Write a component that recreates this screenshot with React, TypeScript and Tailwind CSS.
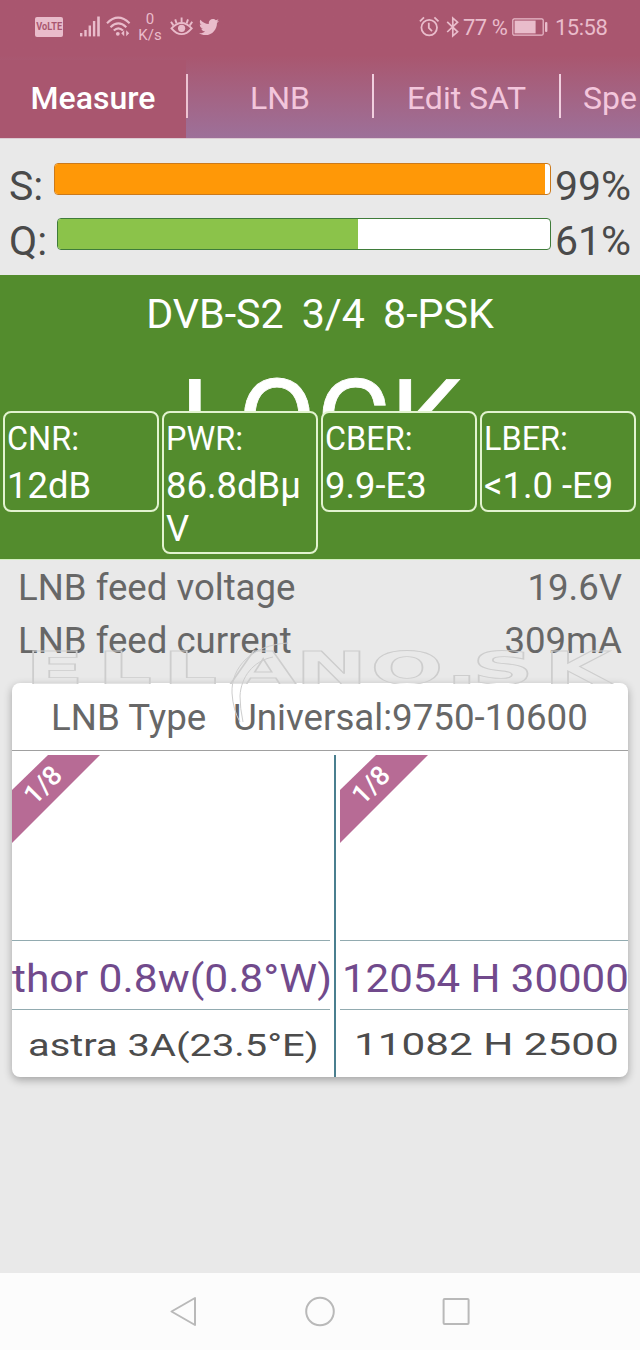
import React from "react";
import { FaTwitter } from "react-icons/fa";

const tint = "#e9bccb";

function Volte() {
  return (
    <div className="ml-[35px] mt-[17px] flex h-[20px] w-[28px] items-center justify-center rounded-[2px] bg-[#e9bccb]">
      <span className="inline-block scale-x-[0.8] text-[11.5px] leading-none font-bold text-[#a9566f]">VoLTE</span>
    </div>
  );
}

function StatusBar() {
  return (
    <div className="flex h-[60px] items-start text-[#e9bccb]">
      <Volte />
      <svg className="mt-[16px] ml-[16px]" width="22" height="21" viewBox="0 0 22 21" fill={tint}>
        <rect x="1" y="17" width="2.4" height="3.4" />
        <rect x="5.3" y="14" width="2.4" height="6.4" />
        <rect x="9.6" y="9.5" width="2.4" height="10.9" />
        <rect x="13.9" y="5" width="2.4" height="15.4" />
        <rect x="18.2" y="0.5" width="2.6" height="19.9" />
      </svg>
      <svg className="mt-[16px] ml-[5px]" width="25" height="21" viewBox="0 0 25 21" fill="none" stroke={tint} strokeWidth="2.1">
        <path d="M1 7.2 Q12 -3.8 23.6 7.2" />
        <path d="M4.5 11.2 Q12.3 3.6 20.3 11.2" />
        <path d="M7.8 14.6 Q12.3 10.2 17 14.6" />
        <circle cx="11.8" cy="17.8" r="1.9" fill={tint} stroke="none" />
        <path d="M18.2 14.2 L15.2 17.2 L18.2 20.2 Z M20.2 14.2 L23.2 17.2 L20.2 20.2 Z" fill={tint} stroke="none" />
      </svg>
      <div className="mt-[11px] ml-[7px] w-[24px] text-center text-[15px] leading-[16px]">
        <div>0</div>
        <div>K/s</div>
      </div>
      <svg className="mt-[16px] ml-[8px]" width="24" height="22" viewBox="0 0 24 22" fill="none" stroke={tint} strokeWidth="1.9">
        <path d="M1.5 12.3 Q11.6 1.6 21.7 12.3 Q11.6 24 1.5 12.3 Z" />
        <circle cx="11.6" cy="12.3" r="3.6" fill={tint} stroke="none" />
        <path d="M11.6 1.5 V6 M5.2 3.4 L6.6 7.4 M18 3.4 L16.6 7.4 M1 5.8 L3.4 9.4 M22.2 5.8 L19.8 9.4" />
      </svg>
      <FaTwitter className="mt-[17px] ml-[5px]" size={20} color={tint} />
      <svg className="mt-[16px] ml-[200px]" width="21" height="21" viewBox="0 0 21 21" fill="none" stroke={tint} strokeWidth="1.8">
        <circle cx="10.2" cy="11.6" r="7.8" />
        <path d="M9.8 6.8 V12 L13 15.2" />
        <path d="M0.9 5.3 L5 1.4 M19.5 5.3 L15.4 1.4" />
      </svg>
      <svg className="mt-[16px] ml-[6px]" width="14" height="22" viewBox="0 0 14 22" fill="none" stroke={tint} strokeWidth="1.7">
        <path d="M1.2 5.8 L11.6 15.8 L6.8 20 V2 L11.6 6.2 L1.2 16" />
      </svg>
      <div className="mt-[15px] ml-[3px] w-[46px] text-[22px] leading-[26px] tracking-[-0.5px] whitespace-nowrap">77 %</div>
      <svg className="mt-[18px] ml-[3px]" width="36" height="18" viewBox="0 0 36 18">
        <rect x="0.8" y="0.8" width="30.4" height="16.4" rx="1.5" fill="none" stroke={tint} strokeWidth="1.2" />
        <rect x="2.6" y="2.6" width="21" height="12.8" fill={tint} />
        <rect x="33" y="4" width="2.4" height="10" rx="1" fill={tint} />
      </svg>
      <div className="mt-[15px] ml-[7px] text-[22px] leading-[26px] tracking-[-0.5px]">15:58</div>
    </div>
  );
}

function Tabs() {
  return (
    <div className="flex h-[78px] w-[746px] text-[32px] leading-[76px] text-[#f3c6dc]">
      <div className="w-[186px] bg-[#a9566f] text-center font-medium text-white">Measure</div>
      <div className="mt-[14px] h-[44px] w-[2px] bg-[#edc3d2]" />
      <div className="w-[184px] text-center">LNB</div>
      <div className="mt-[14px] h-[44px] w-[2px] bg-[#f1cfdf]" />
      <div className="w-[185px] text-center">Edit SAT</div>
      <div className="mt-[14px] h-[44px] w-[2px] bg-[#f1cfdf]" />
      <div className="pl-[22px]">Spe</div>
    </div>
  );
}

type GaugeProps = { label: string; labelClass: string; value: number; frame: string; fill: string };

function Gauge({ label, labelClass, value, frame, fill }: GaugeProps) {
  return (
    <div className="flex h-[55px] items-start pl-[9px] text-[41px] leading-[48px] text-[#4a4a4a]">
      <div className={labelClass}>{label}</div>
      <div className={`mt-px h-[32px] flex-1 overflow-hidden rounded-[4px] border-[1.5px] bg-white ${frame}`}>
        <div className={`h-full ${fill}`} style={{ width: `${value}%` }} />
      </div>
      <div className="w-[89px] pl-[4px]">{value}%</div>
    </div>
  );
}

function Metric({ label, value }: { label: string; value: string }) {
  return (
    <div className="w-[156px] rounded-[8px] border-2 border-[#e2f3cf] bg-[#538c2d] px-[2px] pb-[2px]">
      <div className="text-[32.4px] leading-[52px]">{label}</div>
      <div className="text-[36.4px] leading-[42.5px] break-all">{value}</div>
    </div>
  );
}

function Ribbon() {
  return (
    <div className="relative h-[88px] w-[88px]">
      <svg className="block" width="88" height="88" viewBox="0 0 88 88">
        <path d="M36 0 H88 L0 88 V35 Z" fill="#b76b95" />
      </svg>
      <span className="absolute top-[15px] left-[9px] w-[44px] -rotate-45 text-center text-[27px] leading-[30px] font-medium text-white">1/8</span>
    </div>
  );
}

function Watermark() {
  return (
    <svg className="pointer-events-none absolute top-0 left-0" width="640" height="740" viewBox="0 0 640 740" fill="none" stroke="#cdcdcd">
      <g clipPath="url(#above-card)">
        <text
          transform="translate(0 683.5) scale(1.95 1)"
          x="13 50 83.5 118 151.5 190 228.5 242 279"
          y="0"
          className="font-['DejaVu_Sans'] text-[44px] font-bold"
          strokeWidth="0.9"
        >
          ELLANO.SK
        </text>
      </g>
      <path d="M288 643 C252 645 231 667 232 693 Q233 710 240 722 M273 657 C253 661 241 677 240 696 Q240 708 243 722" />
      <defs>
        <clipPath id="above-card">
          <rect x="0" y="640" width="640" height="44" />
        </clipPath>
      </defs>
    </svg>
  );
}

export default function App() {
  return (
    <div className="relative flex h-[1350px] w-[640px] flex-col overflow-hidden bg-[#e9e9e9] font-['Roboto',sans-serif]">
      <header className="h-[138px] shrink-0 overflow-hidden bg-linear-to-b from-[#a9566f] from-40% to-[#9d7099]">
        <StatusBar />
        <Tabs />
      </header>

      <section className="h-[137px] shrink-0 border-t border-[#dccbd3] pt-[23px]">
        <Gauge label="S:" labelClass="w-[45px]" value={99} frame="border-[#cb7a1c]" fill="bg-[#ff9807]" />
        <Gauge label="Q:" labelClass="w-[48px]" value={61} frame="border-[#3f7c3a]" fill="bg-[#8bc34a]" />
      </section>

      <section className="h-[284px] shrink-0 bg-[#538c2d] pt-[15px] text-white">
        <div className="text-center text-[41.2px] leading-[48px] [word-spacing:-1.2px] whitespace-pre">DVB-S2  3/4  8-PSK</div>
        <div className="h-[73px] pl-[2px] text-center text-[114px] leading-[166px] [-webkit-text-stroke:0.8px_white]">LOCK</div>
        <div className="relative flex items-start gap-[3px] pl-[3px]">
          <Metric label="CNR:" value="12dB" />
          <Metric label="PWR:" value="86.8dBμV" />
          <Metric label="CBER:" value="9.9-E3" />
          <Metric label="LBER:" value="<1.0 -E9" />
        </div>
      </section>

      <section className="h-[124px] shrink-0 border-t border-[#d3efc0] px-[18px] pt-px text-[36.6px] leading-[53px] text-[#676767]">
        <div className="flex justify-between">
          <span>LNB feed voltage</span>
          <span>19.6V</span>
        </div>
        <div className="flex justify-between">
          <span>LNB feed current</span>
          <span>309mA</span>
        </div>
      </section>

      <section className="mx-[12px] h-[394px] shrink-0 overflow-hidden rounded-[8px] bg-white shadow-[0_3px_8px_rgba(0,0,0,0.3)]">
        <div className="flex h-[68px] border-b border-[#a0a0a0] pl-[39px] text-[36.7px] leading-[70px] text-[#676767]">
          <span className="w-[182px]">LNB Type</span>
          <span className="whitespace-nowrap">Universal:9750-10600</span>
        </div>
        <div className="flex h-[326px] pt-[4px]">
          <div className="flex w-[318px] flex-col">
            <div className="h-[186px] shrink-0 border-b border-[#92abb0]">
              <Ribbon />
            </div>
            <div className="h-[69px] shrink-0 border-b border-[#92abb0] text-[38px] leading-[77px] whitespace-nowrap text-[#714a8c]">
              <span className="inline-block origin-left scale-x-[1.12]">thor 0.8w(0.8°W)</span>
            </div>
            <div className="pl-[16px] text-[31px] leading-[71px] whitespace-nowrap text-[#4c4c4c]">
              <span className="inline-block origin-left scale-x-[1.285]">astra 3A(23.5°E)</span>
            </div>
          </div>
          <div className="mx-[4px] w-[2px] bg-[#4a7f8f]" />
          <div className="flex w-[288px] flex-col">
            <div className="h-[186px] shrink-0 border-b border-[#92abb0]">
              <Ribbon />
            </div>
            <div className="h-[69px] shrink-0 border-b border-[#92abb0] pl-[2px] text-[38px] leading-[77px] whitespace-nowrap text-[#714a8c]">
              <span className="inline-block origin-left scale-x-[1.105]">12054 H 30000</span>
            </div>
            <div className="pl-[14px] text-[32px] leading-[69px] whitespace-nowrap text-[#4c4c4c]">
              <span className="inline-block origin-left scale-x-[1.32]">11082 H 2500</span>
            </div>
          </div>
        </div>
      </section>

      <nav className="mt-auto flex h-[77px] shrink-0 justify-center gap-[104px] bg-[#fcfcfc] pt-[22px]">
        <svg width="32" height="32" viewBox="0 0 32 32" fill="none" stroke="#b9b9b9" strokeWidth="2" strokeLinejoin="round">
          <path d="M27 3 V30 L3.5 16.5 Z" />
        </svg>
        <svg width="32" height="32" viewBox="0 0 32 32" fill="none" stroke="#b9b9b9" strokeWidth="2">
          <circle cx="16" cy="16.5" r="13.8" />
        </svg>
        <svg width="32" height="32" viewBox="0 0 32 32" fill="none" stroke="#b9b9b9" strokeWidth="2">
          <rect x="3.6" y="4" width="25" height="25" rx="1" />
        </svg>
      </nav>
      <Watermark />
    </div>
  );
}
